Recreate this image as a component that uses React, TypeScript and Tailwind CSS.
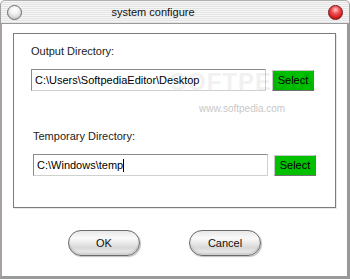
import React from "react";

const font = { fontFamily: '"Liberation Sans", Arial, sans-serif' };

function Circle({ red }: { red?: boolean }) {
  return (
    <div
      className={
        red
          ? "w-[15px] h-[15px] rounded-full border border-[#7a1010] bg-[radial-gradient(circle_at_50%_30%,#ffd0d0_0%,#f05050_35%,#c81818_75%,#a00_100%)]"
          : "w-[15px] h-[15px] rounded-full border border-[#6a6a6a] bg-[radial-gradient(circle_at_50%_30%,#ffffff_0%,#f0f0f0_40%,#c8c8c8_80%,#a8a8a8_100%)]"
      }
    />
  );
}

function Field({ label, value, caret }: { label: string; value: string; caret?: boolean }) {
  return (
    <div className="flex flex-col">
      <div className="text-[11px] text-[#222] leading-[13px]">{label}</div>
      <div className="flex items-center mt-[11px] gap-[6px]">
        <div className="w-[235px] h-[22px] border border-[#8a8a8a] border-b-[#d0d0d0] border-r-[#d0d0d0] bg-white flex items-center px-[3px] text-[11px] text-black">
          <span>{value}</span>
          {caret && <span className="w-[1px] h-[13px] bg-black" />}
        </div>
        <div className="w-[42px] h-[21px] bg-[#00c000] border border-[#c8c8c8] border-b-[#707070] border-r-[#707070] flex items-center justify-center text-[11px] text-black">
          Select
        </div>
      </div>
    </div>
  );
}

function PillButton({ label }: { label: string }) {
  return (
    <div className="w-[72px] h-[26px] rounded-full border border-[#6a6a6a] bg-[linear-gradient(180deg,#e8e8e8_0%,#fafafa_30%,#d8d8d8_70%,#f4f4f4_100%)] shadow-[inset_0_-2px_2px_rgba(0,0,0,0.15),1px_1px_1px_rgba(0,0,0,0.25)] flex items-center justify-center text-[11px] text-[#111]">
      {label}
    </div>
  );
}

export default function App() {
  return (
    <div className="w-[350px] h-[279px] flex flex-col bg-white overflow-hidden" style={font}>
      <div className="h-[24px] flex items-center justify-between px-[6px] border-b border-[#9a9a9a] bg-[repeating-linear-gradient(180deg,#f6f6f6_0px,#f6f6f6_1px,#e4e4e4_1px,#e4e4e4_2px)] rounded-t-[5px] border-t border-l border-r border-t-[#b0b0b0] border-l-[#a0a0a0] border-r-[#a0a0a0]">
        <Circle />
        <div className="text-[11px] text-[#111] mr-[44px]">system configure</div>
        <Circle red />
      </div>
      <div className="flex-1 flex flex-col border-l-[2px] border-l-[#a8a0a0] border-r-[3px] border-r-[#989898] border-b-[3px] border-b-[#9a9a9a] px-[11px] pt-[9px]">
        <div className="relative h-[175px] border border-[#7c7c7c] shadow-[1px_1px_0_#e8e8e8] pl-[17px] pt-[11px] flex flex-col gap-[39px]">
          <Field label="Output Directory:" value="C:\Users\SoftpediaEditor\Desktop" />
          <div className="pl-[2px]">
            <Field label="Temporary Directory:" value="C:\Windows\temp" caret />
          </div>
          <div className="absolute left-[156px] top-[35px] text-[24px] leading-[26px] tracking-[1px] text-[#000] opacity-[0.05] font-bold pointer-events-none">
            SOFTPEDIA
          </div>
          <div className="absolute left-[185px] top-[67px] text-[10px] text-[#c8c8c8] pointer-events-none">
            www.softpedia.com
          </div>
        </div>
        <div className="flex items-center pl-[55px] gap-[49px] mt-[22px]">
          <PillButton label="OK" />
          <PillButton label="Cancel" />
        </div>
      </div>
    </div>
  );
}
